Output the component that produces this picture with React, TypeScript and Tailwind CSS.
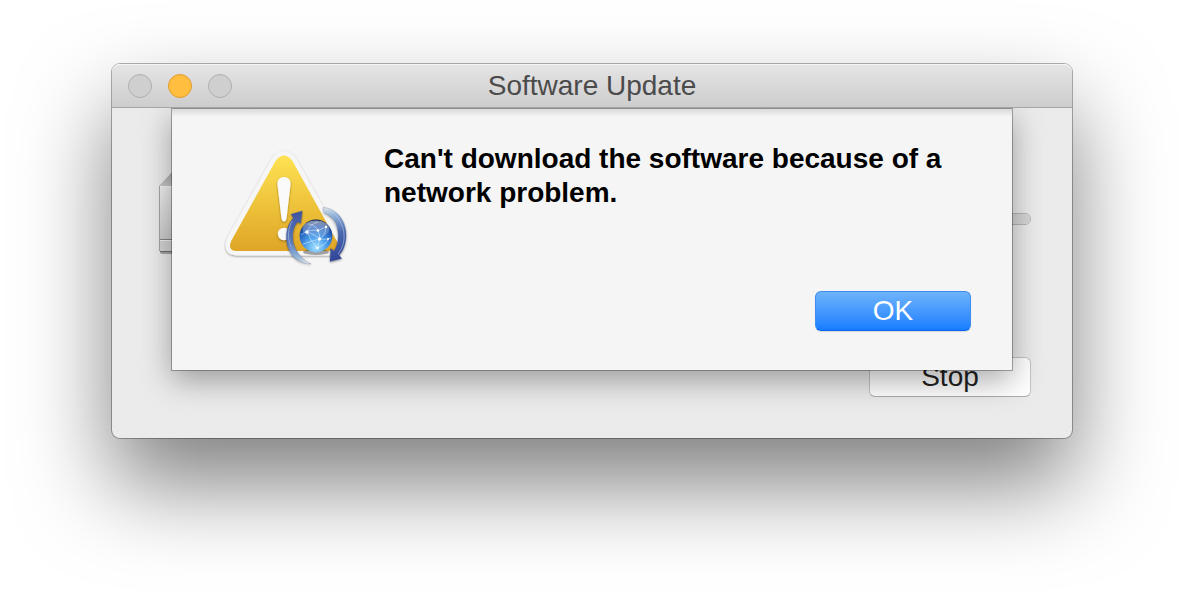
import React from "react";

function DiskIcon() {
  return (
    <svg className="h-[102px] w-32 shrink-0" viewBox="0 0 128 102" aria-hidden="true">
      <defs>
        <linearGradient id="diskTop" x1="0" y1="0" x2="0" y2="1">
          <stop offset="0" stopColor="#a2a2a2" />
          <stop offset="1" stopColor="#c6c6c6" />
        </linearGradient>
        <linearGradient id="diskFace" x1="0" y1="0" x2="0" y2="1">
          <stop offset="0" stopColor="#f0f0f0" />
          <stop offset="1" stopColor="#cccccc" />
        </linearGradient>
      </defs>
      <rect x="2" y="80" width="124" height="6" rx="2" fill="#000" opacity="0.3" />
      <path d="M1 18 L18 0 H110 L127 18 Z" fill="url(#diskTop)" />
      <path d="M1 18 H127 V71 H1 Z" fill="url(#diskFace)" />
      <path d="M1 18.5 H127" stroke="#f5f5f5" />
      <path d="M1 71 H127 V82 Q127 84 124 84 H4 Q1 84 1 82 Z" fill="#d4d4d4" />
      <path d="M1 71.5 H127" stroke="#858585" />
      <path d="M2 72.5 H126" stroke="#f0f0f0" />
      <path d="M2 83.5 H126" stroke="#707070" />
      <path d="M1.5 18 V83" stroke="#a5a5a5" />
    </svg>
  );
}

function UpdateAlertIcon() {
  return (
    <svg className="size-32 shrink-0" viewBox="0 0 128 128" role="img" aria-label="Caution">
      <defs>
        <linearGradient id="caution" x1="0" y1="0" x2="0" y2="1">
          <stop offset="0" stopColor="#fee253" />
          <stop offset="0.5" stopColor="#eec43c" />
          <stop offset="1" stopColor="#dfa526" />
        </linearGradient>
        <radialGradient id="globe" cx="0.5" cy="0.85" r="0.85">
          <stop offset="0" stopColor="#a4e2ff" />
          <stop offset="0.4" stopColor="#4a9dea" />
          <stop offset="0.75" stopColor="#1f56b4" />
          <stop offset="1" stopColor="#0b1d4c" />
        </radialGradient>
        <linearGradient id="gloss" x1="0" y1="0" x2="0" y2="1">
          <stop offset="0" stopColor="#fff" stopOpacity="0.5" />
          <stop offset="1" stopColor="#fff" stopOpacity="0.1" />
        </linearGradient>
        <linearGradient id="arrowLeft" gradientUnits="userSpaceOnUse" x1="72" y1="72" x2="86" y2="123">
          <stop offset="0" stopColor="#3f55a3" />
          <stop offset="0.5" stopColor="#5b7bbb" />
          <stop offset="0.8" stopColor="#93b5d8" />
          <stop offset="1" stopColor="#c4dcec" stopOpacity="0" />
        </linearGradient>
        <linearGradient id="arrowRight" gradientUnits="userSpaceOnUse" x1="116" y1="116" x2="102" y2="65">
          <stop offset="0" stopColor="#33479a" />
          <stop offset="0.45" stopColor="#4a68ae" />
          <stop offset="0.8" stopColor="#93b5d8" />
          <stop offset="1" stopColor="#c4dcec" stopOpacity="0.2" />
        </linearGradient>
        <filter id="soft" x="-20%" y="-20%" width="140%" height="140%">
          <feDropShadow dx="0" dy="1" stdDeviation="1" floodOpacity="0.4" />
        </filter>
      </defs>

      <path
        d="M53.5 19 Q62 8 70.5 19 L114.8 98 Q119 109 109 109 H15 Q5 109 9.2 98 Z"
        fill="#f6f6f6"
        stroke="#f6f6f6"
        strokeWidth="9"
        strokeLinejoin="round"
        filter="url(#soft)"
      />
      <path
        d="M53.5 19 Q62 8 70.5 19 L114.8 99 Q119 109 109 109 H15 Q5 109 9.2 99 Z"
        fill="url(#caution)"
      />
      <g fill="#fafafa" filter="url(#soft)">
        <path d="M62 35 C66 35 68.8 38 68.6 42 L64.6 76 Q64 79.5 62 79.5 Q60 79.5 59.4 76 L55.4 42 C55.2 38 58 35 62 35 Z" />
        <circle cx="62" cy="92" r="6.2" />
      </g>

      <g filter="url(#soft)">
        <path
          d="M75.5 80 C70 86 70 97 72 103 C75 112 81 118 89 122 C74 122 65 110 64.5 97 C64 88 67 80 71.5 76 L69 72.3 L80.3 69 L78.7 81.3 Z"
          fill="url(#arrowLeft)"
          stroke="#304383"
          strokeOpacity="0.35"
          strokeWidth="0.7"
        />
        <path
          d="M108.7 106.3 L112 109 C118 100 117.5 86 112 78 C109 74 105 72 102 71 L101 65.5 C115 66 125 80 124 95 C123.5 103 121 109 117 113 L119.7 116.6 L108 119.5 Z"
          fill="url(#arrowRight)"
          stroke="#263878"
          strokeOpacity="0.3"
          strokeWidth="0.7"
        />
      </g>
      <path d="M70.5 79 C66 85 65 96 69 105" fill="none" stroke="#b4c7eb" strokeOpacity="0.6" />
      <path d="M110 70 C122 79 127 98 116 112" fill="none" stroke="#b4c7eb" strokeOpacity="0.6" />

      <ellipse cx="94" cy="110" rx="13" ry="3" fill="#000" opacity="0.35" />
      <circle cx="94" cy="94" r="16.4" fill="url(#globe)" />
      <ellipse cx="94" cy="87" rx="13.5" ry="8.5" fill="url(#gloss)" />
      <g fill="none" stroke="#e4f4ff" strokeWidth="0.6" strokeOpacity="0.85">
        <path d="M79 93 Q86 87 96 88.5 L104 85" />
        <path d="M85 90 Q88 82 96 80" />
        <path d="M85 90 Q88 98 95.5 106" />
        <path d="M85 90 Q93 92 97.5 97" />
        <path d="M96 88.5 Q98 93 97.5 97 T95.5 106" />
        <path d="M96 88.5 Q92 82 86 82" />
        <path d="M97.5 97 Q104 93 104 85" />
        <path d="M97.5 97 Q104 98 109 96" />
        <path d="M81 102 Q90 99 97.5 97" />
        <path d="M95.5 106 Q103 103 106 98" />
      </g>
      <g fill="#fff">
        <circle cx="85" cy="90" r="1.7" />
        <circle cx="96" cy="88.5" r="1.3" />
        <circle cx="97.5" cy="97" r="1.7" />
        <circle cx="104" cy="85" r="1.2" />
        <circle cx="95.5" cy="106" r="1.2" />
        <circle cx="106" cy="97" r="1" />
      </g>
    </svg>
  );
}

function TitleBar() {
  return (
    <header className="grid h-11 grid-cols-[1fr_auto_1fr] items-center rounded-t-lg border-b border-[#a5a5a5] bg-linear-to-b from-[#e6e5e6] to-[#cecdce] px-4 shadow-[inset_0_1px_0_#f5f5f5]">
      <div className="flex gap-4">
        <button type="button" aria-label="Close" className="size-6 rounded-full border border-[#b0afb0] bg-[#d0cfd0]" />
        <button type="button" aria-label="Minimize" className="size-6 rounded-full border border-[#df9d2f] bg-[#ffbe3f]" />
        <button type="button" aria-label="Zoom" className="size-6 rounded-full border border-[#b0afb0] bg-[#d0cfd0]" />
      </div>
      <h1 className="text-[28px] leading-8 text-[#4b4b4b]">Software Update</h1>
    </header>
  );
}

function AlertSheet() {
  return (
    <div
      role="alertdialog"
      aria-labelledby="alert-message"
      className="absolute inset-x-[60px] top-0 border-t border-[#8f8f8f] bg-[#f5f5f5] pt-[33px] pr-[41px] pb-[39px] pl-[50px] shadow-[0_0_0_1px_rgba(0,0,0,0.3),0_10px_30px_rgba(0,0,0,0.35)]"
    >
      <div className="pointer-events-none absolute inset-x-0 top-0 h-2 bg-linear-to-b from-[#dadada] to-[#f5f5f5]" />
      <div className="flex gap-[34px]">
        <UpdateAlertIcon />
        <p id="alert-message" className="text-[28px] leading-[34px] font-bold text-black">
          Can't download the software because of a network problem.
        </p>
      </div>
      <div className="mt-[21px] flex justify-end">
        <button
          type="button"
          className="h-10 w-[156px] rounded-md border border-[#3d8df0] border-b-[#0b62f5] bg-linear-to-b from-[#6db3fa] to-[#147dff] text-[28px] leading-8 text-white shadow-[0_1px_1px_rgba(0,0,0,0.12)]"
        >
          OK
        </button>
      </div>
    </div>
  );
}

export default function App() {
  return (
    <div className="overflow-hidden bg-white px-28 pt-16 pb-40 font-['Liberation_Sans',Arial,sans-serif]">
      <main className="rounded-lg bg-[#ebebeb] shadow-[0_0_0_1px_rgba(0,0,0,0.3),0_46px_90px_rgba(0,0,0,0.5)]">
        <TitleBar />
        <section className="relative overflow-hidden rounded-b-lg pt-[60px] pr-[41px] pb-[41px] pl-[46px]">
          <div className="flex items-center gap-8">
            <DiskIcon />
            <progress
              aria-label="Download progress"
              value={0}
              max={100}
              className="h-3 min-w-0 flex-1 appearance-none overflow-hidden rounded-full border border-[#b5b5b5] bg-[#d6d6d6] [&::-webkit-progress-bar]:bg-[#d6d6d6]"
            />
          </div>
          <div className="mt-[87px] flex justify-end">
            <button
              type="button"
              className="h-10 w-[162px] rounded-md border border-[#c3c3c3] border-b-[#adadad] bg-white text-[28px] leading-8 text-[#222]"
            >
              Stop
            </button>
          </div>
          <AlertSheet />
        </section>
      </main>
    </div>
  );
}
